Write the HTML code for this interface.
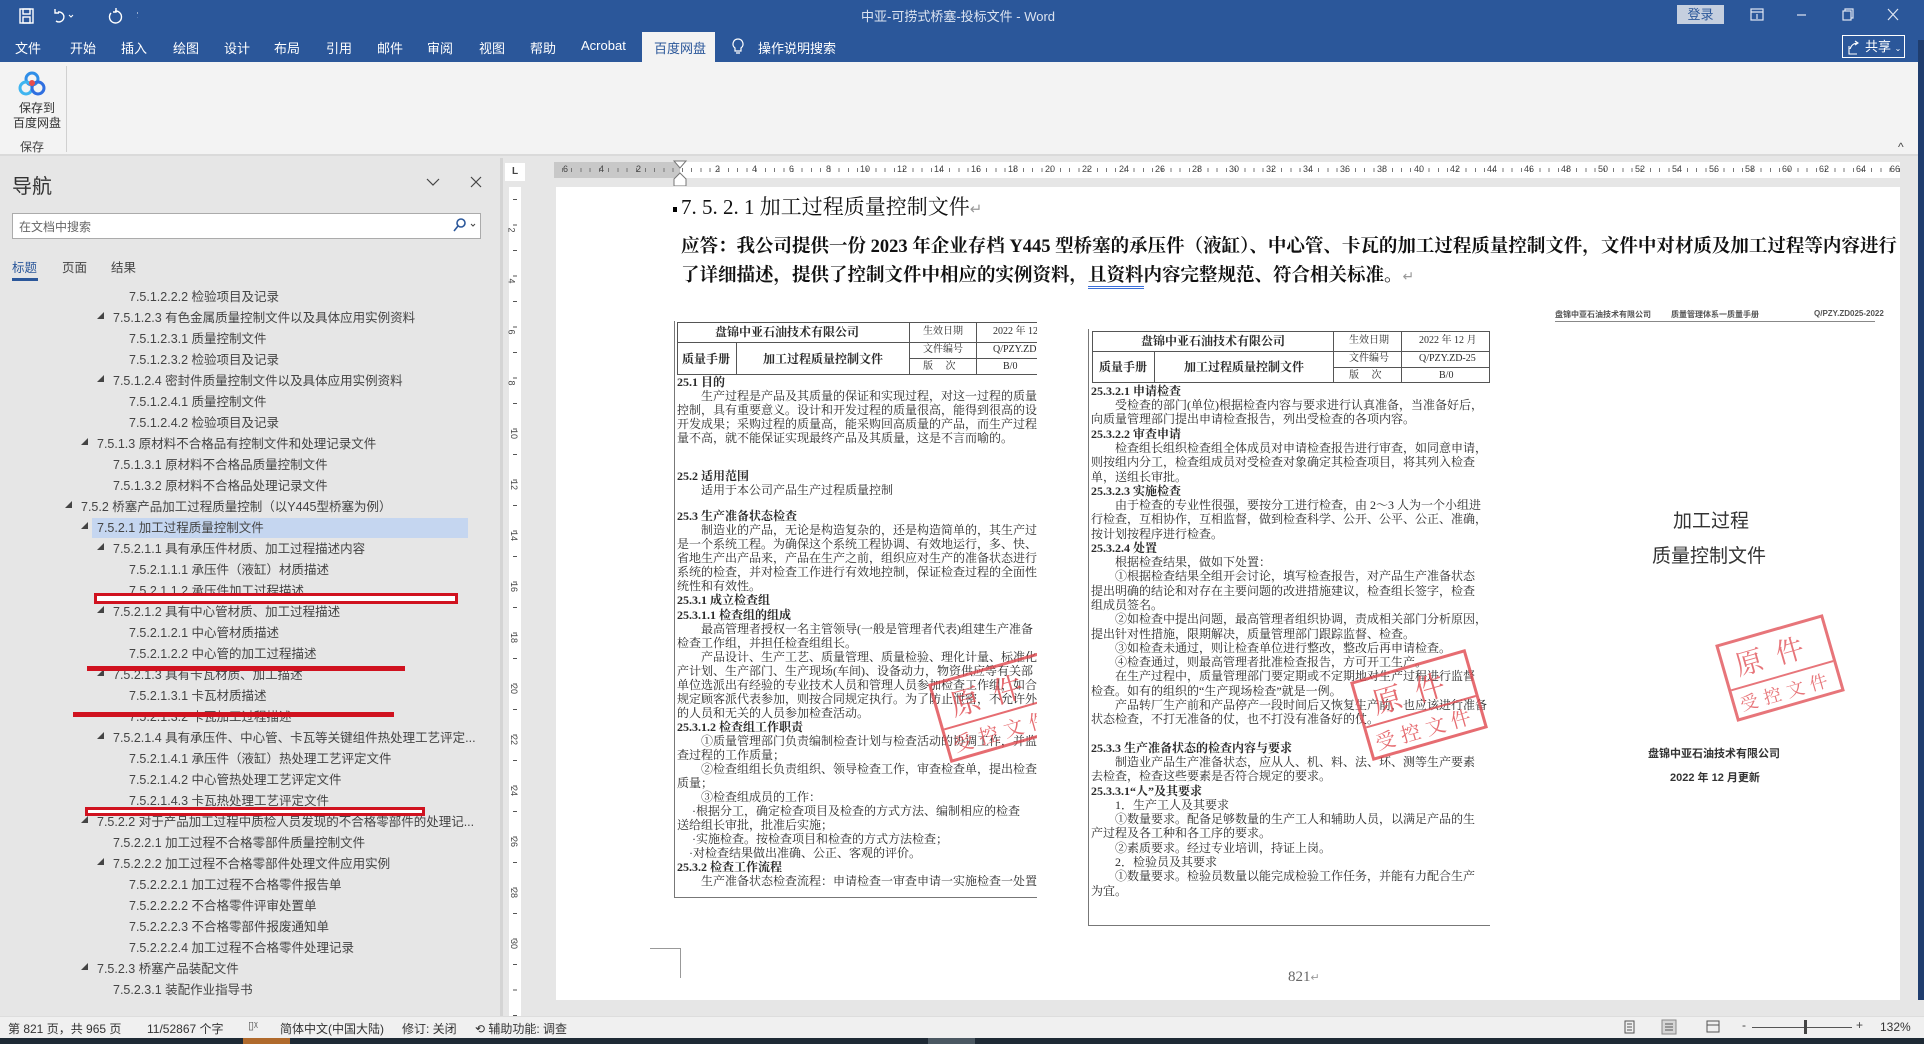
<!DOCTYPE html>
<html><head><meta charset="utf-8">
<style>
*{margin:0;padding:0;box-sizing:border-box}
body{width:1924px;height:1044px;overflow:hidden;position:relative;background:#e6e6e6;font-family:"Liberation Sans","Noto Sans CJK SC",sans-serif;color:#333}
.a{position:absolute;white-space:nowrap}
.tab{position:absolute;top:38px;font-size:13px;color:#fff}
.nv{position:absolute;font-size:12.5px;color:#444;white-space:nowrap;line-height:16px}
.tri{position:absolute;width:0;height:0;border-left:7px solid transparent;border-bottom:7px solid #444}
.sc{position:absolute;background:#fff;overflow:hidden;font-family:"Liberation Serif","Noto Serif CJK SC",serif;color:#2a2a2a}
.sc .l{position:absolute;white-space:nowrap;font-size:12px;line-height:14px}
.sc .b{font-weight:bold}
.stamp{position:absolute;border:3px solid #e0484e;color:#e0484e;opacity:.8;transform:rotate(-16deg);font-family:"Noto Serif CJK SC",serif;text-align:center}
.rn{position:absolute;top:164px;font-size:9px;color:#444}
.vn{position:absolute;left:509px;font-size:9px;color:#444;transform:rotate(90deg)}
</style></head><body>

<!-- title bar + tabs -->
<div class="a" style="left:0;top:0;width:1924px;height:62px;background:#2b579a"></div>
<svg class="a" style="left:18px;top:6px" width="120" height="20" viewBox="0 0 120 20" fill="none" stroke="#fff" stroke-width="1.4">
<rect x="2" y="3" width="13" height="14"/><rect x="5" y="3" width="7" height="5"/><rect x="5" y="11" width="7" height="6"/>
<path d="M40 6 a5 5 0 1 1 -2 9 M37 3 v4 h4"/><path d="M51 9 l2 2 l2-2" stroke-width="1"/>
<path d="M97 5 a6 6 0 1 1 -4 2 M98 2 v4 h-3"/><path d="M120 8 h4" /><path d="M119 7 h5 M120 11 l1.5 2 l1.5-2" stroke-width="1"/>
</svg>
<div class="a" style="left:861px;top:6px;font-size:13px;color:#dbe3f0">中亚-可捞式桥塞-投标文件 - Word</div>
<div class="a" style="left:1677px;top:5px;width:47px;height:19px;background:#c5cfdf;color:#2b579a;font-size:13px;text-align:center;line-height:19px">登录</div>
<svg class="a" style="left:1740px;top:4px" width="170" height="20" fill="none" stroke="#dfe6f2" stroke-width="1.2">
<rect x="11" y="5" width="12" height="11"/><path d="M11 8 h12 M17 10 v5"/>
<path d="M57 11 h9"/>
<rect x="103" y="7" width="8" height="9"/><path d="M105 7 v-2 h8 v9 h-2"/>
<path d="M148 5 l10 11 M158 5 l-10 11"/>
</svg>
<div class="a" style="left:1918px;top:40px;width:6px;height:960px;background:#1f3d6e"></div>
<div class="tab" style="left:15px">文件</div><div class="tab" style="left:70px">开始</div><div class="tab" style="left:121px">插入</div>
<div class="tab" style="left:173px">绘图</div><div class="tab" style="left:224px">设计</div><div class="tab" style="left:274px">布局</div>
<div class="tab" style="left:326px">引用</div><div class="tab" style="left:377px">邮件</div><div class="tab" style="left:427px">审阅</div>
<div class="tab" style="left:479px">视图</div><div class="tab" style="left:530px">帮助</div><div class="tab" style="left:581px">Acrobat</div>
<div class="a" style="left:642px;top:32px;width:73px;height:30px;background:#f3f3f3"></div>
<div class="tab" style="left:654px;color:#2b579a">百度网盘</div>
<svg class="a" style="left:731px;top:37px" width="14" height="20" fill="none" stroke="#fff" stroke-width="1.2"><path d="M7 2 a5 5 0 0 1 3 9 v3 h-6 v-3 a5 5 0 0 1 3-9z M5 16 h4"/></svg>
<div class="tab" style="left:758px">操作说明搜索</div>
<div class="a" style="left:1842px;top:35px;width:63px;height:23px;border:1px solid #fff;color:#fff;font-size:13px;line-height:21px;padding-left:22px">共享 <span style="font-size:8px">⌄</span></div>
<svg class="a" style="left:1846px;top:39px" width="14" height="16" fill="none" stroke="#fff" stroke-width="1.1"><path d="M3 7 v8 h8 M4 10 q2-6 8-6 M9 2 l3 2 l-3 2"/></svg>

<!-- ribbon -->
<div class="a" style="left:0;top:62px;width:1918px;height:94px;background:#f3f3f3;border-bottom:2px solid #dadada"></div>
<svg class="a" style="left:18px;top:70px" width="28" height="28"><circle cx="14" cy="9" r="6" fill="none" stroke="#2f8ee8" stroke-width="3"/><circle cx="8" cy="18" r="6" fill="none" stroke="#3fb5f0" stroke-width="3"/><circle cx="20" cy="18" r="6" fill="none" stroke="#2f6fe0" stroke-width="3"/><circle cx="14" cy="13" r="3" fill="#e84c4c"/></svg>
<div class="a" style="left:13px;top:101px;font-size:12px;color:#333;line-height:15px;text-align:center">保存到<br>百度网盘</div>
<div class="a" style="left:20px;top:138px;font-size:12px;color:#444">保存</div>
<div class="a" style="left:66px;top:66px;width:1px;height:86px;background:#d0d0d0"></div>
<div class="a" style="left:1898px;top:140px;font-size:12px;color:#444">^</div>

<!-- nav pane -->
<div class="a" style="left:0;top:158px;width:500px;height:858px;background:#e6e6e6"></div>
<div class="a" style="left:500px;top:158px;width:3px;height:858px;background:#d4d4d4"></div>
<div class="a" style="left:12px;top:170px;font-size:20px;color:#333">导航</div>
<svg class="a" style="left:425px;top:174px" width="60" height="16" fill="none" stroke="#444" stroke-width="1.2"><path d="M2 5 l6 6 l6-6 M46 3 l10 10 M56 3 l-10 10"/></svg>
<div class="a" style="left:12px;top:213px;width:469px;height:26px;background:#fff;border:1px solid #ababab"></div>
<div class="a" style="left:19px;top:218px;font-size:12px;color:#666">在文档中搜索</div>
<svg class="a" style="left:452px;top:217px" width="26" height="16" fill="none" stroke="#2b579a" stroke-width="1.6"><circle cx="9" cy="6" r="4"/><path d="M6 9 l-4 5"/><path d="M19 7 l2 2 l2-2" stroke="#444" stroke-width="1"/></svg>
<div class="a" style="left:12px;top:257px;font-size:12.5px;color:#2b579a">标题</div>
<div class="a" style="left:62px;top:257px;font-size:12.5px;color:#444">页面</div>
<div class="a" style="left:111px;top:257px;font-size:12.5px;color:#444">结果</div>
<div class="a" style="left:12px;top:278px;width:26px;height:3px;background:#2b579a"></div>

<div class="a" style="left:92px;top:518px;width:376px;height:20px;background:#c5d6f0"></div>
<div class="nv" style="left:129px;top:289px">7.5.1.2.2.2 检验项目及记录</div>
<div class="tri" style="left:97px;top:312px"></div><div class="nv" style="left:113px;top:310px">7.5.1.2.3 有色金属质量控制文件以及具体应用实例资料</div>
<div class="nv" style="left:129px;top:331px">7.5.1.2.3.1 质量控制文件</div>
<div class="nv" style="left:129px;top:352px">7.5.1.2.3.2 检验项目及记录</div>
<div class="tri" style="left:97px;top:375px"></div><div class="nv" style="left:113px;top:373px">7.5.1.2.4 密封件质量控制文件以及具体应用实例资料</div>
<div class="nv" style="left:129px;top:394px">7.5.1.2.4.1 质量控制文件</div>
<div class="nv" style="left:129px;top:415px">7.5.1.2.4.2 检验项目及记录</div>
<div class="tri" style="left:81px;top:438px"></div><div class="nv" style="left:97px;top:436px">7.5.1.3 原材料不合格品有控制文件和处理记录文件</div>
<div class="nv" style="left:113px;top:457px">7.5.1.3.1 原材料不合格品质量控制文件</div>
<div class="nv" style="left:113px;top:478px">7.5.1.3.2 原材料不合格品处理记录文件</div>
<div class="tri" style="left:65px;top:501px"></div><div class="nv" style="left:81px;top:499px">7.5.2 桥塞产品加工过程质量控制（以Y445型桥塞为例）</div>
<div class="tri" style="left:81px;top:522px"></div><div class="nv" style="left:97px;top:520px">7.5.2.1 加工过程质量控制文件</div>
<div class="tri" style="left:97px;top:543px"></div><div class="nv" style="left:113px;top:541px">7.5.2.1.1 具有承压件材质、加工过程描述内容</div>
<div class="nv" style="left:129px;top:562px">7.5.2.1.1.1 承压件（液缸）材质描述</div>
<div class="nv" style="left:129px;top:583px">7.5.2.1.1.2 承压件加工过程描述</div>
<div class="tri" style="left:97px;top:606px"></div><div class="nv" style="left:113px;top:604px">7.5.2.1.2 具有中心管材质、加工过程描述</div>
<div class="nv" style="left:129px;top:625px">7.5.2.1.2.1 中心管材质描述</div>
<div class="nv" style="left:129px;top:646px">7.5.2.1.2.2 中心管的加工过程描述</div>
<div class="tri" style="left:97px;top:669px"></div><div class="nv" style="left:113px;top:667px">7.5.2.1.3 具有卡瓦材质、加工描述</div>
<div class="nv" style="left:129px;top:688px">7.5.2.1.3.1 卡瓦材质描述</div>
<div class="nv" style="left:129px;top:709px">7.5.2.1.3.2 卡瓦加工过程描述</div>
<div class="tri" style="left:97px;top:732px"></div><div class="nv" style="left:113px;top:730px">7.5.2.1.4 具有承压件、中心管、卡瓦等关键组件热处理工艺评定...</div>
<div class="nv" style="left:129px;top:751px">7.5.2.1.4.1 承压件（液缸）热处理工艺评定文件</div>
<div class="nv" style="left:129px;top:772px">7.5.2.1.4.2 中心管热处理工艺评定文件</div>
<div class="nv" style="left:129px;top:793px">7.5.2.1.4.3 卡瓦热处理工艺评定文件</div>
<div class="tri" style="left:81px;top:816px"></div><div class="nv" style="left:97px;top:814px">7.5.2.2 对于产品加工过程中质检人员发现的不合格零部件的处理记...</div>
<div class="nv" style="left:113px;top:835px">7.5.2.2.1 加工过程不合格零部件质量控制文件</div>
<div class="tri" style="left:97px;top:858px"></div><div class="nv" style="left:113px;top:856px">7.5.2.2.2 加工过程不合格零部件处理文件应用实例</div>
<div class="nv" style="left:129px;top:877px">7.5.2.2.2.1 加工过程不合格零件报告单</div>
<div class="nv" style="left:129px;top:898px">7.5.2.2.2.2 不合格零件评审处置单</div>
<div class="nv" style="left:129px;top:919px">7.5.2.2.2.3 不合格零部件报废通知单</div>
<div class="nv" style="left:129px;top:940px">7.5.2.2.2.4 加工过程不合格零件处理记录</div>
<div class="tri" style="left:81px;top:963px"></div><div class="nv" style="left:97px;top:961px">7.5.2.3 桥塞产品装配文件</div>
<div class="nv" style="left:113px;top:982px">7.5.2.3.1 装配作业指导书</div>
<!-- red annotations -->
<div class="a" style="left:94px;top:593px;width:364px;height:11px;border:3px solid #d0121f;background:#fff"></div>
<div class="a" style="left:87px;top:666px;width:318px;height:5px;background:#d0121f"></div>
<div class="a" style="left:73px;top:712px;width:321px;height:5px;background:#d0121f"></div>
<div class="a" style="left:85px;top:807px;width:340px;height:9px;border:3px solid #d0121f;background:#fff"></div>

<!-- rulers -->
<div class="a" style="left:505px;top:163px;width:20px;height:18px;background:#fff;font-size:10px;font-weight:bold;text-align:center;line-height:18px;color:#444">L</div>
<div class="a" style="left:554px;top:162px;width:1346px;height:16px;background:#fff"></div>
<div class="a" style="left:554px;top:162px;width:126px;height:16px;background:#c8c8c8"></div>
<div class="a" style="left:554px;top:168px;width:1346px;height:4px;background:repeating-linear-gradient(90deg,transparent 0 8px,#777 8px 9px,transparent 9px 9.22px)"></div>
<svg class="a" style="left:673px;top:160px" width="14" height="26"><path d="M1 1 h12 l-6 7z M1 26 v-7 l6-6 l6 6 v7z" fill="#fff" stroke="#777"/></svg>
<div class="rn" style="left:563px">6</div><div class="rn" style="left:599px">4</div><div class="rn" style="left:636px">2</div>
<div class="rn" style="left:715px">2</div><div class="rn" style="left:752px">4</div><div class="rn" style="left:789px">6</div><div class="rn" style="left:826px">8</div>
<div class="rn" style="left:860px">10</div><div class="rn" style="left:897px">12</div><div class="rn" style="left:934px">14</div><div class="rn" style="left:971px">16</div>
<div class="rn" style="left:1008px">18</div><div class="rn" style="left:1045px">20</div><div class="rn" style="left:1082px">22</div><div class="rn" style="left:1119px">24</div>
<div class="rn" style="left:1155px">26</div><div class="rn" style="left:1192px">28</div><div class="rn" style="left:1229px">30</div><div class="rn" style="left:1266px">32</div>
<div class="rn" style="left:1303px">34</div><div class="rn" style="left:1340px">36</div><div class="rn" style="left:1377px">38</div><div class="rn" style="left:1414px">40</div>
<div class="rn" style="left:1450px">42</div><div class="rn" style="left:1487px">44</div><div class="rn" style="left:1524px">46</div><div class="rn" style="left:1561px">48</div>
<div class="rn" style="left:1598px">50</div><div class="rn" style="left:1635px">52</div><div class="rn" style="left:1672px">54</div><div class="rn" style="left:1709px">56</div>
<div class="rn" style="left:1745px">58</div><div class="rn" style="left:1782px">60</div><div class="rn" style="left:1819px">62</div><div class="rn" style="left:1856px">64</div><div class="rn" style="left:1890px">66</div>
<div class="a" style="left:509px;top:187px;width:12px;height:829px;background:#fff"></div>
<div class="a" style="left:513px;top:187px;width:4px;height:829px;background:repeating-linear-gradient(180deg,transparent 0 12px,#555 12px 13px,transparent 13px 25.5px)"></div>
<div class="vn" style="top:225px">2</div><div class="vn" style="top:276px">4</div><div class="vn" style="top:327px">6</div><div class="vn" style="top:378px">8</div>
<div class="vn" style="top:429px">10</div><div class="vn" style="top:480px">12</div><div class="vn" style="top:531px">14</div><div class="vn" style="top:582px">16</div>
<div class="vn" style="top:633px">18</div><div class="vn" style="top:684px">20</div><div class="vn" style="top:735px">22</div><div class="vn" style="top:786px">24</div>
<div class="vn" style="top:837px">26</div><div class="vn" style="top:888px">28</div><div class="vn" style="top:939px">30</div>

<!-- page -->
<div class="a" style="left:556px;top:187px;width:1344px;height:813px;background:#fff"></div>
<div class="a" style="left:673px;top:207px;width:4px;height:5px;background:#000"></div>
<div class="a" style="left:681px;top:191px;font-family:'Liberation Serif','Noto Serif CJK SC',serif;font-size:21px;color:#111">7. 5. 2. 1 加工过程质量控制文件<span style="color:#999;font-size:15px">↵</span></div>
<div class="a" style="left:681px;top:232px;width:1219px;overflow:hidden;font-family:'Liberation Serif','Noto Serif CJK SC',serif;font-size:18.5px;font-weight:bold;color:#111">应答：我公司提供一份 2023 年企业存档 Y445 型桥塞的承压件（液缸）、中心管、卡瓦的加工过程质量控制文件，文件中对材质及加工过程等内容进行</div>
<div class="a" style="left:681px;top:261px;font-family:'Liberation Serif','Noto Serif CJK SC',serif;font-size:18.5px;font-weight:bold;color:#111">了详细描述，提供了控制文件中相应的实例资料，<span style="border-bottom:3px double #3a6fd8">且资料</span>内容完整规范、符合相关标准。<span style="color:#999;font-weight:normal;font-size:14px">↵</span></div>

<!-- left scan -->
<div class="sc" style="left:674px;top:321px;width:363px;height:577px;border-left:1px solid #777;border-bottom:1px solid #777">
 <div class="a" style="left:2px;top:1px;width:400px;height:53px;border:1px solid #555"></div>
 <div class="a" style="left:2px;top:21px;width:400px;height:1px;background:#555"></div>
 <div class="a" style="left:234px;top:37px;width:200px;height:1px;background:#555"></div>
 <div class="a" style="left:61px;top:21px;width:1px;height:33px;background:#555"></div>
 <div class="a" style="left:234px;top:1px;width:1px;height:53px;background:#555"></div>
 <div class="a" style="left:301px;top:1px;width:1px;height:53px;background:#555"></div>
 <div class="l b" style="left:40px;top:4px">盘锦中亚石油技术有限公司</div>
 <div class="l" style="left:248px;top:4px;font-size:10px">生效日期</div><div class="l" style="left:318px;top:4px;font-size:10px">2022 年 12</div>
 <div class="l b" style="left:7px;top:31px">质量手册</div><div class="l b" style="left:88px;top:31px">加工过程质量控制文件</div>
 <div class="l" style="left:248px;top:22px;font-size:10px">文件编号</div><div class="l" style="left:318px;top:22px;font-size:10px">Q/PZY.ZD</div>
 <div class="l" style="left:248px;top:39px;font-size:10px">版　 次</div><div class="l" style="left:328px;top:39px;font-size:10px">B/0</div>
 <div class="l b" style="left:2px;top:54px">25.1 目的</div>
 <div class="l" style="left:2px;top:68px">　　生产过程是产品及其质量的保证和实现过程，对这一过程的质量</div>
 <div class="l" style="left:2px;top:82px">控制，具有重要意义。设计和开发过程的质量很高，能得到很高的设</div>
 <div class="l" style="left:2px;top:96px">开发成果；采购过程的质量高，能采购回高质量的产品，而生产过程</div>
 <div class="l" style="left:2px;top:110px">量不高，就不能保证实现最终产品及其质量，这是不言而喻的。</div>
 <div class="l b" style="left:2px;top:148px">25.2 适用范围</div>
 <div class="l" style="left:2px;top:162px">　　适用于本公司产品生产过程质量控制</div>
 <div class="l b" style="left:2px;top:188px">25.3 生产准备状态检查</div>
 <div class="l" style="left:2px;top:202px">　　制造业的产品，无论是构造复杂的，还是构造简单的，其生产过</div>
 <div class="l" style="left:2px;top:216px">是一个系统工程。为确保这个系统工程协调、有效地运行，多、快、</div>
 <div class="l" style="left:2px;top:230px">省地生产出产品来，产品在生产之前，组织应对生产的准备状态进行全</div>
 <div class="l" style="left:2px;top:244px">系统的检查，并对检查工作进行有效地控制，保证检查过程的全面性</div>
 <div class="l" style="left:2px;top:258px">统性和有效性。</div>
 <div class="l b" style="left:2px;top:272px">25.3.1 成立检查组</div>
 <div class="l b" style="left:2px;top:287px">25.3.1.1 检查组的组成</div>
 <div class="l" style="left:2px;top:301px">　　最高管理者授权一名主管领导(一般是管理者代表)组建生产准备</div>
 <div class="l" style="left:2px;top:315px">检查工作组，并担任检查组组长。</div>
 <div class="l" style="left:2px;top:329px">　　产品设计、生产工艺、质量管理、质量检验、理化计量、标准化</div>
 <div class="l" style="left:2px;top:343px">产计划、生产部门、生产现场(车间)、设备动力，物资供应等有关部</div>
 <div class="l" style="left:2px;top:357px">单位选派出有经验的专业技术人员和管理人员参加检查工作组，如合</div>
 <div class="l" style="left:2px;top:371px">规定顾客派代表参加，则按合同规定执行。为了防止泄密，不允许外</div>
 <div class="l" style="left:2px;top:385px">的人员和无关的人员参加检查活动。</div>
 <div class="l b" style="left:2px;top:399px">25.3.1.2 检查组工作职责</div>
 <div class="l" style="left:2px;top:413px">　　①质量管理部门负责编制检查计划与检查活动的协调工作，并监</div>
 <div class="l" style="left:2px;top:427px">查过程的工作质量；</div>
 <div class="l" style="left:2px;top:441px">　　②检查组组长负责组织、领导检查工作，审查检查单，提出检查</div>
 <div class="l" style="left:2px;top:455px">质量；</div>
 <div class="l" style="left:2px;top:469px">　　③检查组成员的工作：</div>
 <div class="l" style="left:2px;top:483px">　 ·根据分工，确定检查项目及检查的方式方法、编制相应的检查</div>
 <div class="l" style="left:2px;top:497px">送给组长审批，批准后实施；</div>
 <div class="l" style="left:2px;top:511px">　 ·实施检查。按检查项目和检查的方式方法检查；</div>
 <div class="l" style="left:2px;top:525px">　·对检查结果做出准确、公正、客观的评价。</div>
 <div class="l b" style="left:2px;top:539px">25.3.2 检查工作流程</div>
 <div class="l" style="left:2px;top:553px">　　生产准备状态检查流程：申请检查一审查申请一实施检查一处置</div>
 <div class="stamp" style="left:262px;top:345px;width:120px;height:82px"><div style="font-size:30px;line-height:44px;border-bottom:2px solid #e0484e;letter-spacing:14px">原件</div><div style="font-size:20px;line-height:32px;letter-spacing:6px">受控文件</div></div>
</div>

<!-- middle scan -->
<div class="sc" style="left:1088px;top:329px;width:402px;height:597px;border-left:1px solid #777;border-bottom:1px solid #777">
 <div class="a" style="left:3px;top:2px;width:398px;height:52px;border:1px solid #555"></div>
 <div class="a" style="left:3px;top:22px;width:398px;height:1px;background:#555"></div>
 <div class="a" style="left:244px;top:38px;width:157px;height:1px;background:#555"></div>
 <div class="a" style="left:65px;top:22px;width:1px;height:32px;background:#555"></div>
 <div class="a" style="left:244px;top:2px;width:1px;height:52px;background:#555"></div>
 <div class="a" style="left:312px;top:2px;width:1px;height:52px;background:#555"></div>
 <div class="l b" style="left:52px;top:5px">盘锦中亚石油技术有限公司</div>
 <div class="l" style="left:260px;top:5px;font-size:10px">生效日期</div><div class="l" style="left:330px;top:5px;font-size:10px">2022 年 12 月</div>
 <div class="l b" style="left:10px;top:31px">质量手册</div><div class="l b" style="left:95px;top:31px">加工过程质量控制文件</div>
 <div class="l" style="left:260px;top:23px;font-size:10px">文件编号</div><div class="l" style="left:330px;top:23px;font-size:10px">Q/PZY.ZD-25</div>
 <div class="l" style="left:260px;top:40px;font-size:10px">版　 次</div><div class="l" style="left:350px;top:40px;font-size:10px">B/0</div>
 <div class="l b" style="left:2px;top:55px">25.3.2.1 申请检查</div>
 <div class="l" style="left:2px;top:69px">　　受检查的部门(单位)根据检查内容与要求进行认真准备，当准备好后，</div>
 <div class="l" style="left:2px;top:83px">向质量管理部门提出申请检查报告，列出受检查的各项内容。</div>
 <div class="l b" style="left:2px;top:98px">25.3.2.2 审查申请</div>
 <div class="l" style="left:2px;top:112px">　　检查组长组织检查组全体成员对申请检查报告进行审查，如同意申请，</div>
 <div class="l" style="left:2px;top:126px">则按组内分工，检查组成员对受检查对象确定其检查项目，将其列入检查</div>
 <div class="l" style="left:2px;top:141px">单，送组长审批。</div>
 <div class="l b" style="left:2px;top:155px">25.3.2.3 实施检查</div>
 <div class="l" style="left:2px;top:169px">　　由于检查的专业性很强，要按分工进行检查，由 2～3 人为一个小组进</div>
 <div class="l" style="left:2px;top:183px">行检查，互相协作，互相监督，做到检查科学、公开、公平、公正、准确，</div>
 <div class="l" style="left:2px;top:198px">按计划按程序进行检查。</div>
 <div class="l b" style="left:2px;top:212px">25.3.2.4 处置</div>
 <div class="l" style="left:2px;top:226px">　　根据检查结果，做如下处置：</div>
 <div class="l" style="left:2px;top:240px">　　①根据检查结果全组开会讨论，填写检查报告，对产品生产准备状态</div>
 <div class="l" style="left:2px;top:255px">提出明确的结论和对存在主要问题的改进措施建议，检查组长签字，检查</div>
 <div class="l" style="left:2px;top:269px">组成员签名。</div>
 <div class="l" style="left:2px;top:283px">　　②如检查中提出问题，最高管理者组织协调，责成相关部门分析原因，</div>
 <div class="l" style="left:2px;top:298px">提出针对性措施，限期解决，质量管理部门跟踪监督、检查。</div>
 <div class="l" style="left:2px;top:312px">　　③如检查未通过，则让检查单位进行整改，整改后再申请检查。</div>
 <div class="l" style="left:2px;top:326px">　　④检查通过，则最高管理者批准检查报告，方可开工生产。</div>
 <div class="l" style="left:2px;top:340px">　　在生产过程中，质量管理部门要定期或不定期地对生产过程进行监督</div>
 <div class="l" style="left:2px;top:355px">检查。如有的组织的“生产现场检查”就是一例。</div>
 <div class="l" style="left:2px;top:369px">　　产品转厂生产前和产品停产一段时间后又恢复生产前，也应该进行准备</div>
 <div class="l" style="left:2px;top:383px">状态检查，不打无准备的仗，也不打没有准备好的仗。</div>
 <div class="l b" style="left:2px;top:412px">25.3.3  生产准备状态的检查内容与要求</div>
 <div class="l" style="left:2px;top:426px">　　制造业产品生产准备状态，应从人、机、料、法、环、测等生产要素</div>
 <div class="l" style="left:2px;top:440px">去检查，检查这些要素是否符合规定的要求。</div>
 <div class="l b" style="left:2px;top:455px">25.3.3.1“人”及其要求</div>
 <div class="l" style="left:2px;top:469px">　　1．生产工人及其要求</div>
 <div class="l" style="left:2px;top:483px">　　①数量要求。配备足够数量的生产工人和辅助人员，以满足产品的生</div>
 <div class="l" style="left:2px;top:497px">产过程及各工种和各工序的要求。</div>
 <div class="l" style="left:2px;top:512px">　　②素质要求。经过专业培训，持证上岗。</div>
 <div class="l" style="left:2px;top:526px">　　2．检验员及其要求</div>
 <div class="l" style="left:2px;top:540px">　　①数量要求。检验员数量以能完成检验工作任务，并能有力配合生产</div>
 <div class="l" style="left:2px;top:555px">为宜。</div>
 <div class="stamp" style="left:270px;top:335px;width:120px;height:82px"><div style="font-size:30px;line-height:44px;border-bottom:2px solid #e0484e;letter-spacing:14px">原件</div><div style="font-size:20px;line-height:32px;letter-spacing:6px">受控文件</div></div>
</div>

<!-- cover scan -->
<div class="a" style="left:1555px;top:309px;font-size:8px;color:#555;font-weight:bold">盘锦中亚石油技术有限公司</div>
<div class="a" style="left:1671px;top:309px;font-size:8px;color:#555;font-weight:bold">质量管理体系一质量手册</div>
<div class="a" style="left:1814px;top:309px;font-size:8px;color:#555;font-weight:bold">Q/PZY.ZD025-2022</div>
<div class="a" style="left:1555px;top:321px;width:320px;height:1px;background:#888"></div>
<div class="a" style="left:1673px;top:506px;font-family:'Noto Sans CJK SC',sans-serif;font-size:19px;color:#333">加工过程</div>
<div class="a" style="left:1652px;top:541px;font-family:'Noto Sans CJK SC',sans-serif;font-size:19px;color:#333">质量控制文件</div>
<div class="stamp" style="left:1724px;top:628px;width:112px;height:80px;opacity:.75"><div style="font-size:28px;line-height:44px;border-bottom:2px solid #e0484e;letter-spacing:14px">原件</div><div style="font-size:18px;line-height:30px;letter-spacing:6px">受控文件</div></div>
<div class="a" style="left:1648px;top:745px;font-size:11px;font-weight:bold;color:#333">盘锦中亚石油技术有限公司</div>
<div class="a" style="left:1670px;top:769px;font-size:11px;font-weight:bold;color:#333">2022 年 12 月更新</div>

<div class="a" style="left:1288px;top:969px;font-family:'Liberation Serif',serif;font-size:15px;color:#666">821<span style="font-size:11px;color:#999">↵</span></div>
<div class="a" style="left:650px;top:948px;width:31px;height:30px;border-top:1px solid #999;border-right:1px solid #999"></div>

<!-- status bar -->
<div class="a" style="left:0;top:1016px;width:1924px;height:22px;background:#f0f0f0;border-top:1px solid #ddd"></div>
<div class="a" style="left:8px;top:1020px;font-size:12px;color:#333">第 821 页，共 965 页</div>
<div class="a" style="left:147px;top:1020px;font-size:12px;color:#333">11/52867 个字</div>
<div class="a" style="left:248px;top:1019px;font-size:11px;color:#555">▯ᵡ</div>
<div class="a" style="left:280px;top:1020px;font-size:12px;color:#333">简体中文(中国大陆)</div>
<div class="a" style="left:402px;top:1020px;font-size:12px;color:#333">修订: 关闭</div>
<div class="a" style="left:475px;top:1020px;font-size:12px;color:#333">⟲ 辅助功能: 调查</div>
<svg class="a" style="left:1622px;top:1019px" width="110" height="16" fill="none" stroke="#555"><rect x="3" y="2" width="9" height="12"/><path d="M5 5 h5 M5 8 h5 M5 11 h5"/><rect x="40" y="1" width="14" height="14" fill="#d6d6d6" stroke="#888"/><path d="M43 5 h8 M43 8 h8 M43 11 h8"/><rect x="85" y="2" width="12" height="11"/><path d="M85 6 h12"/></svg>
<div class="a" style="left:1742px;top:1018px;font-size:12px;color:#444">-</div>
<div class="a" style="left:1752px;top:1027px;width:100px;height:1px;background:#555"></div>
<div class="a" style="left:1804px;top:1020px;width:3px;height:14px;background:#444"></div>
<div class="a" style="left:1856px;top:1018px;font-size:12px;color:#444">+</div>
<div class="a" style="left:1880px;top:1020px;font-size:12px;color:#333">132%</div>
<div class="a" style="left:0;top:1038px;width:1924px;height:6px;background:#1e2a35"></div>
<div class="a" style="left:243px;top:1038px;width:47px;height:6px;background:#b06a2c"></div>
<div class="a" style="left:928px;top:1038px;width:47px;height:6px;background:#4b5862"></div>
</body></html>
